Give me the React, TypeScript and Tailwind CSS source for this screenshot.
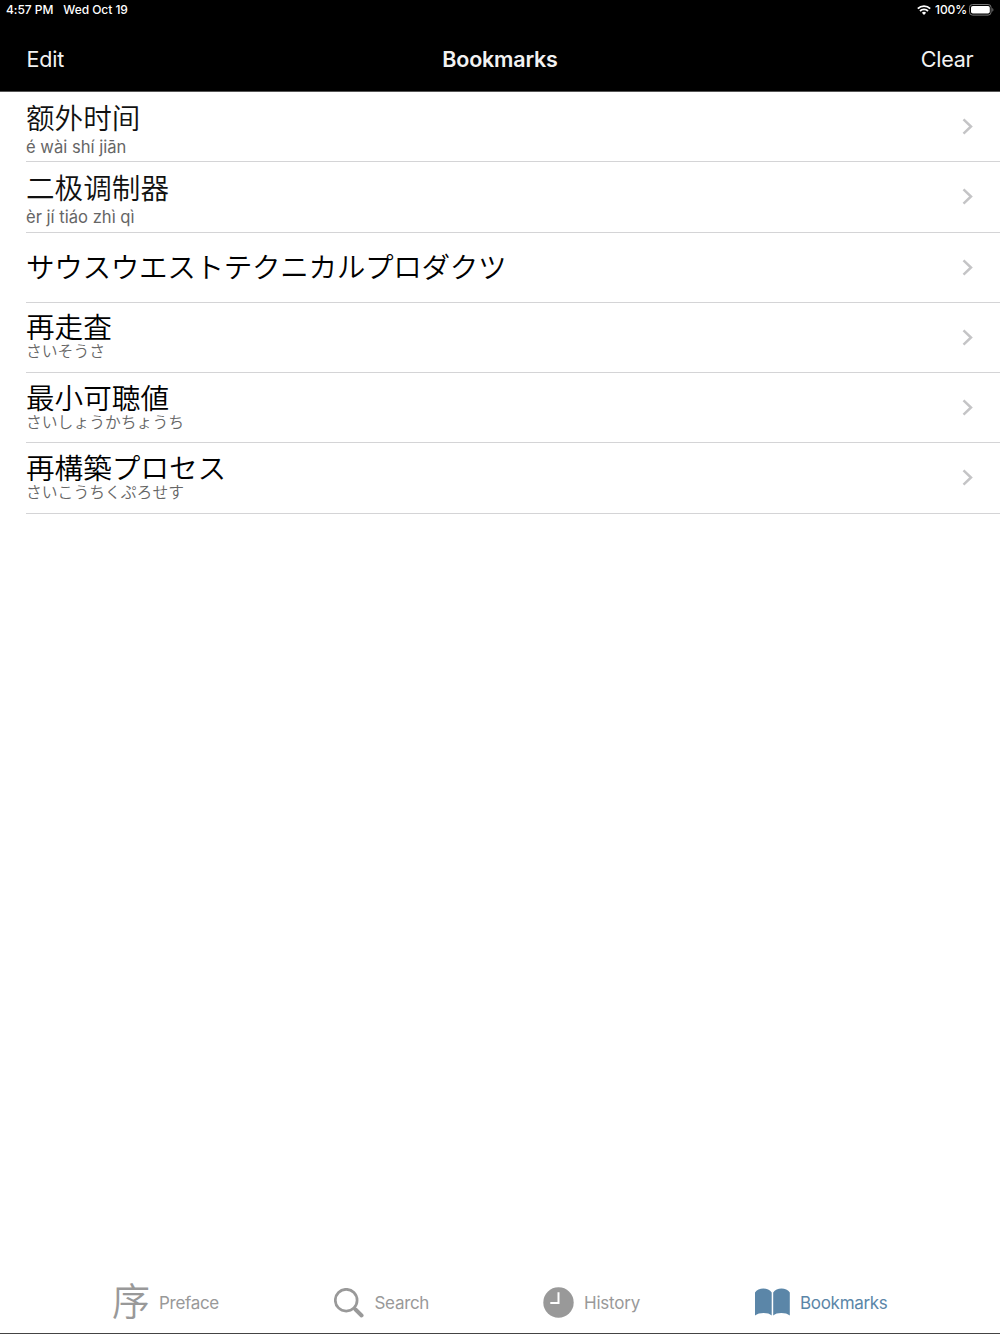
type TBookmark = {
  title: string;
  reading?: string;
  lang: "zh" | "ja";
};

const bookmarks: TBookmark[] = [
  { title: "额外时间", reading: "é wài shí jiān", lang: "zh" },
  { title: "二极调制器", reading: "èr jí tiáo zhì qì", lang: "zh" },
  { title: "サウスウエストテクニカルプロダクツ", lang: "ja" },
  { title: "再走査", reading: "さいそうさ", lang: "ja" },
  { title: "最小可聴値", reading: "さいしょうかちょうち", lang: "ja" },
  { title: "再構築プロセス", reading: "さいこうちくぷろせす", lang: "ja" },
];

const StatusBar = () => (
  <div className="flex h-5 items-center justify-between pr-[6px] pl-[6px] text-[12px] leading-5 font-medium">
    <div className="flex gap-[10px]">
      <span className="tracking-[-0.05px]">4:57 PM</span>
      <span className="tracking-[-0.05px]">Wed Oct 19</span>
    </div>
    <div className="flex items-center">
      <svg width="14" height="10" viewBox="0 0 14 10" fill="none" stroke="white" strokeWidth="1.8">
        <path d="M0.8 3.7a8.8 8.8 0 0 1 12.4 0" />
        <path d="M3 6a5.7 5.7 0 0 1 8 0" />
        <path d="M7 10 4.9 7.8a3 3 0 0 1 4.2 0z" fill="white" stroke="none" />
      </svg>
      <span className="ml-1 w-[34px] tracking-[-0.1px]">100%</span>
      <svg width="25" height="12" viewBox="0 0 25 12">
        <rect x="0.5" y="0.5" width="21.6" height="10.6" rx="3" fill="none" stroke="#777" />
        <rect x="2" y="2" width="18.8" height="7.6" rx="1.8" fill="white" />
        <path d="M23.3 4v3.8c1.5-.6 1.5-3.2 0-3.8z" fill="#777" />
      </svg>
    </div>
  </div>
);

const NavBar = () => (
  <div className="grid h-[71px] grid-cols-3 items-center px-[26.5px] pt-[7px] text-[21.5px] tracking-[-0.2px] text-[#f2f2f2]">
    <button className="text-left">Edit</button>
    <h1 className="text-center font-semibold">Bookmarks</h1>
    <button className="text-right">Clear</button>
  </div>
);

const BookmarkRow = ({ title, reading, lang }: TBookmark) => (
  <li className="ml-[26px] flex h-[70.25px] items-center justify-between border-b border-[#d4d4d6] pr-[27px]">
    <div className={lang === "zh" ? "pt-[6px]" : reading ? "pb-[3px]" : "pb-[2px] tracking-[-0.35px]"}>
      <p
        lang={lang}
        className={
          lang === "zh"
            ? "font-['Noto_Sans_CJK_SC',sans-serif] text-[28.6px] leading-[34px] font-[350] text-[#111]"
            : "font-['Noto_Sans_CJK_JP',sans-serif] text-[28.6px] leading-[30px] font-[350] text-black"
        }
      >
        {title}
      </p>
      {reading && (
        <p
          lang={lang}
          className={
            lang === "zh"
              ? "text-[16.6px] leading-[26px] text-[#666]"
              : "font-['Noto_Sans_CJK_JP',sans-serif] text-[15.8px] leading-[19px] font-[350] text-[#666]"
          }
        >
          {reading}
        </p>
      )}
    </div>
    <svg width="11" height="17" viewBox="0 0 11 17" fill="none" stroke="#c4c4c6" strokeWidth="2.5">
      <path d="M1.5 1.3 9 8.5 1.5 15.7" />
    </svg>
  </li>
);

const SearchIcon = () => (
  <svg width="30" height="30" viewBox="0 0 30 30" fill="none" stroke="#999">
    <circle cx="12.2" cy="12.2" r="10.9" strokeWidth="2.7" />
    <path d="m20 20 1.5 1.5" strokeWidth="2.8" />
    <path d="m21.5 21.5 6.1 6" strokeWidth="3.9" strokeLinecap="round" />
  </svg>
);

const HistoryIcon = () => (
  <svg width="31" height="31" viewBox="0 0 31 31" fill="none">
    <circle cx="15.5" cy="15.5" r="15.2" fill="#999" />
    <path d="M15.5 5.3v10.8H7.3" stroke="white" strokeWidth="2" />
  </svg>
);

const BookIcon = () => (
  <svg width="35" height="28" viewBox="0 0 35 28" fill="#5b86a8">
    <path d="M0 4.5C3.2-1 13.5-1 16.7 4.500V27.500C13.5 24.200 4 24.200 0 27.500z" />
    <path d="M18.200 4.500C21.400-1 31.600-1 34.800 4.500V27.500C31 24.200 21.500 24.200 18.200 27.500z" />
  </svg>
);

const TabBar = () => (
  <nav className="flex h-[64px] items-center border-b border-[#444] pt-[2px] pl-[112px] text-[17px] tracking-[-0.3px] text-[#999]">
    <button className="flex w-[222px] items-center">
      <span className="w-[47px] pb-[7px] text-left font-['Noto_Sans_CJK_SC',sans-serif] text-[38px] leading-[38px] font-[350]">
        序
      </span>
      <span className="pt-[2px]">Preface</span>
    </button>
    <button className="flex w-[209px] items-center gap-[10.5px]">
      <SearchIcon />
      <span className="pt-[2px]">Search</span>
    </button>
    <button className="flex w-[212px] items-center gap-[10px] tracking-[-0.2px]">
      <HistoryIcon />
      <span className="pt-[2px]">History</span>
    </button>
    <button className="flex items-center gap-[10px] text-[#5b86a8]">
      <span className="pb-[2px]">
        <BookIcon />
      </span>
      <span className="pt-[2px]">Bookmarks</span>
    </button>
  </nav>
);

const App = () => {
  return (
    <div className="flex h-screen flex-col bg-white font-[Inter,sans-serif]">
      <header className="h-[92px] shrink-0 border-b border-[#555] bg-black text-white">
        <StatusBar />
        <NavBar />
      </header>
      <ul className="flex-1">
        {bookmarks.map((el) => (
          <BookmarkRow key={el.title} {...el} />
        ))}
      </ul>
      <TabBar />
    </div>
  );
};

export default App;
